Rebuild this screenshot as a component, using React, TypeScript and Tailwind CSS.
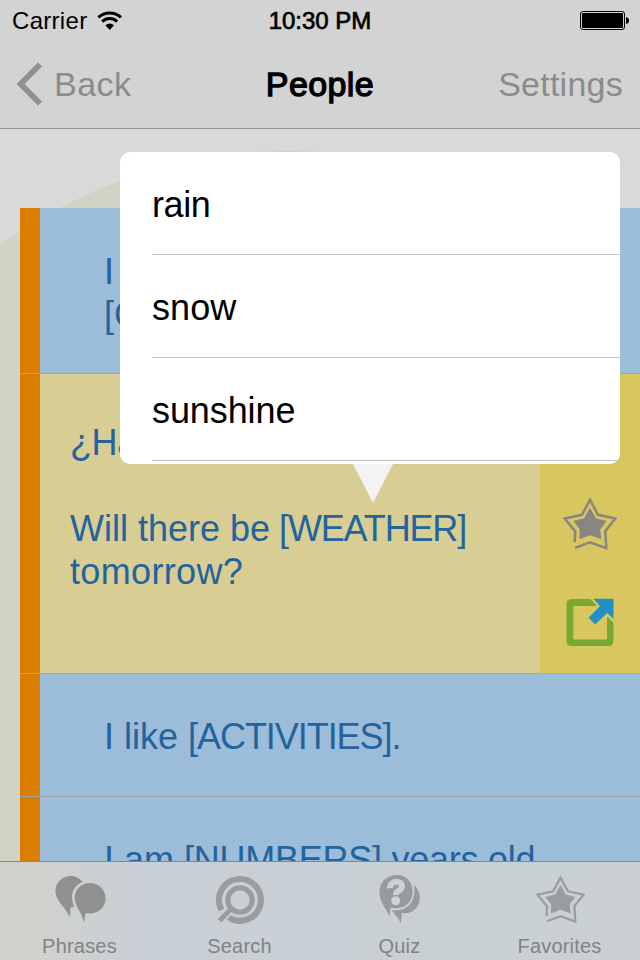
import React from "react";

function BackChevron() {
  return (
    <svg width="27" height="44" viewBox="0 0 27 44" className="block">
      <path d="M24 2.5 L4.6 22 L24 41.5" fill="none" stroke="#909090" strokeWidth="5.8" />
    </svg>
  );
}

function Wifi() {
  return (
    <svg width="26" height="20" viewBox="0 0 26 20" className="block">
      <g fill="none" stroke="#000">
        <path d="M1.4 6.4 A16.5 16.5 0 0 1 24 6.4" strokeWidth="3" />
        <path d="M5.2 10.6 A10.8 10.8 0 0 1 20.2 10.6" strokeWidth="2.9" />
      </g>
      <path d="M8.4 14.2 A7 7 0 0 1 17 14.2 L12.7 19 Z" />
    </svg>
  );
}

function Battery() {
  return (
    <svg width="50" height="20" viewBox="0 0 50 20" className="block">
      <rect x="0.5" y="0.5" width="44" height="18" rx="2.5" fill="none" stroke="#000" />
      <rect x="2" y="2" width="41" height="15" rx="1" />
      <path d="M46 6 Q49 6.5 49 9.5 Q49 12.5 46 13 Z" />
    </svg>
  );
}

function Star({ size, color }: { size: number; color: string }) {
  return (
    <svg width={size} height={size} viewBox="0 0 54 54" className="block">
      <path
        d="M12.2 43.5 L12.8 33.2 L2.6 20.8 L19.2 17.2 L27 2.8 L34.8 17.2 L51.4 20.8 L41.7 33 L42.7 49.4 L27 43.6 L12.6 49"
        fill="none"
        stroke={color}
        strokeWidth="2.4"
      />
      <path
        d="M27 10.3 L32.6 20.6 L43 23.2 L36.8 31 L37.8 40.8 L27 36.8 L16.8 40.8 L17 31 L11 23.2 L21.4 20.6 Z"
        fill={color}
      />
    </svg>
  );
}

function Share() {
  return (
    <svg width="50" height="50" viewBox="0 0 50 50" className="block">
      <path d="M25.5 2 H6.5 Q1.5 2 1.5 7 V44 Q1.5 49 6.5 49 H43.5 Q48.5 49 48.5 44 V25.7 L42 19.5 V42.5 H8.3 V9 H32 Z" fill="#76a832" />
      <path d="M28.4 1.8 H48.5 V22 L42.2 15.9 L30.2 27.4 L23.5 20.8 L35 9 Z" fill="#2191c5" />
    </svg>
  );
}

function PhrasesIcon() {
  return (
    <svg width="54" height="50" viewBox="0 0 54 50" className="block">
      <path d="M29.5 7 C25 1 18 0 13 2 C5 4 1 12 3 20 C4 26 12 32 17 42 L17.4 32.4 Q20 32.7 21 31.5 C17 21 19 11 29.5 7 Z" fill="#909090" />
      <path d="M31 48 C29 37 21.7 31 21.7 23 C21.5 15 28 8 37 8 C46 8 52.5 15 52.5 23.5 C52.5 33.5 43 40.5 32.6 38 Z" fill="#909090" />
    </svg>
  );
}

function SearchIcon() {
  return (
    <svg width="50" height="50" viewBox="0 0 50 50" className="block">
      <g fill="none" stroke="#9b9c9e">
        <path d="M6.6 35 A20.9 20.9 0 1 1 13.6 42.5" strokeWidth="6.2" />
        <circle cx="25" cy="25" r="12.2" strokeWidth="5" />
        <path d="M16.2 33.6 L4.6 45.8" strokeWidth="5" />
      </g>
    </svg>
  );
}

function QuizIcon() {
  return (
    <svg width="44" height="52" viewBox="0 0 44 52" className="block">
      <path d="M36 11 C43 17 44.5 29 36.5 35.8 C33 39 28 39.7 24 38.8 L22.8 49.5 C20.5 43 16 40 14 36.2 C29 38.5 39 27 36 11 Z" fill="#999a9c" />
      <path d="M11.5 43 C9 35 1.5 29 1.5 18.5 C1.5 8 9 1 19 1 C29 1 35 9 34.5 18.5 C34 30 25 36 12.5 33.8 Z" fill="#999a9c" />
      <path d="M12 14.3 C11.5 6 24 5.5 24 12.6 C24 17 17.5 16.5 18 21" fill="none" stroke="#cbd1d6" strokeWidth="6" />
      <circle cx="17.7" cy="26.7" r="4.5" fill="#cbd1d6" />
    </svg>
  );
}

function Tab({ label, children }: { label: string; children: React.ReactNode }) {
  return (
    <div className="flex w-[160px] flex-col items-center">
      <div className="flex h-[70px] items-center pt-[6px]">{children}</div>
      <span className="mr-px text-[20px] leading-[28px] tracking-[0.2px] text-[#818384]">{label}</span>
    </div>
  );
}

const choices = [
  { word: "rain", spacing: "tracking-[-0.4px]" },
  { word: "snow", spacing: "tracking-[0.1px]" },
  { word: "sunshine", spacing: "tracking-[-0.1px]" },
];

export default function App() {
  return (
    <div className="relative isolate flex h-[960px] w-[640px] flex-col overflow-hidden bg-[#d9d9d9] font-['Liberation_Sans',Arial,sans-serif] whitespace-nowrap">
      <div className="absolute top-[151px] left-[-204px] -z-10 h-[988px] w-[988px] rounded-full bg-[#cfd4c5]" />

      <header className="h-[129px] shrink-0 border-b border-[#929292] bg-[#d3d3d3]">
        <div className="grid h-[40px] grid-cols-3 items-center text-[24px] text-black">
          <div className="flex items-center gap-[10px] pt-[2px] pl-[12px]">
            <span className="tracking-[0.3px]">Carrier</span>
            <Wifi />
          </div>
          <div className="pt-[2px] text-center [-webkit-text-stroke:0.7px_black]">10:30 PM</div>
          <div className="flex justify-end pt-px pr-[10px]"><Battery /></div>
        </div>
        <div className="grid h-[88px] grid-cols-3 items-center text-[34px]">
          <div className="flex items-center gap-[11px] pl-[16px] text-[#8b8b8b]">
            <BackChevron />
            <span className="tracking-[0.5px]">Back</span>
          </div>
          <div className="text-center tracking-[0.4px] text-black [-webkit-text-stroke:1.3px_black]">People</div>
          <div className="pr-[17px] text-right tracking-[0.25px] text-[#8b8b8b]">Settings</div>
        </div>
      </header>

      <main className="flex-1 overflow-hidden pt-[79px] pl-[20px] text-[36px] leading-[43px] text-[#24639d]">
        <div className="h-[166px] border-b border-[#98a6a8]">
          <div className="h-full border-l-[20px] border-[#da7d00] bg-[#9bbdd9] pt-[42px] pl-[64px]">
            <p>I</p>
            <p>[C</p>
          </div>
        </div>
        <div className="h-[300px] border-b border-[#aaa99b]">
          <div className="flex h-full border-l-[20px] border-[#da7d00] bg-[#d8ce94]">
            <div className="w-[500px] pt-[47px] pl-[30px]">
              <p className="tracking-[-0.4px]">¿Ha</p>
              <p className="mt-[43px]">
                Will there be <span className="-ml-px tracking-[-1.15px]">[WEATHER]</span>
              </p>
              <p className="tracking-[0.35px]">tomorrow?</p>
            </div>
            <div className="flex w-[100px] flex-col items-center bg-[#d8c75f] pt-[123px]">
              <Star size={56} color="#8a8585" />
              <div className="mt-[44px]"><Share /></div>
            </div>
          </div>
        </div>
        <div className="h-[123px] border-b border-[#98a6a8]">
          <div className="h-full border-l-[20px] border-[#da7d00] bg-[#9bbdd9] pt-[41px] pl-[64px]">
            <p>I like <span className="tracking-[-1.05px]">[ACTIVITIES].</span></p>
          </div>
        </div>
        <div className="h-[123px] border-l-[20px] border-[#da7d00] bg-[#9bbdd9] pt-[41px] pl-[64px]">
          <p>I am <span className="tracking-[-0.25px]">[NUMBERS] years old.</span></p>
        </div>
      </main>

      <nav className="flex h-[99px] shrink-0 border-t border-[#7d8891] bg-linear-to-r from-[#d3d0cb] via-[#c8d0d7] via-25% to-[#cad0d2]">
        <Tab label="Phrases"><PhrasesIcon /></Tab>
        <Tab label="Search"><SearchIcon /></Tab>
        <Tab label="Quiz"><QuizIcon /></Tab>
        <Tab label="Favorites"><Star size={51} color="#9b9c9e" /></Tab>
      </nav>

      <div className="absolute top-[152px] left-[120px] w-[500px]">
        <div className="h-[312px] overflow-hidden rounded-[10px] bg-white pl-[32px] text-[36px] text-black">
          {choices.map((c) => (
            <div key={c.word} className="flex h-[103px] items-center border-b border-[#c4c4c6] pt-[4px]">
              <span className={c.spacing}>{c.word}</span>
            </div>
          ))}
        </div>
        <svg width="40" height="39" viewBox="0 0 40 39" className="ml-[233px] block">
          <path d="M0 0 H40 L20 39 Z" fill="#f3f3f3" />
        </svg>
      </div>
    </div>
  );
}
